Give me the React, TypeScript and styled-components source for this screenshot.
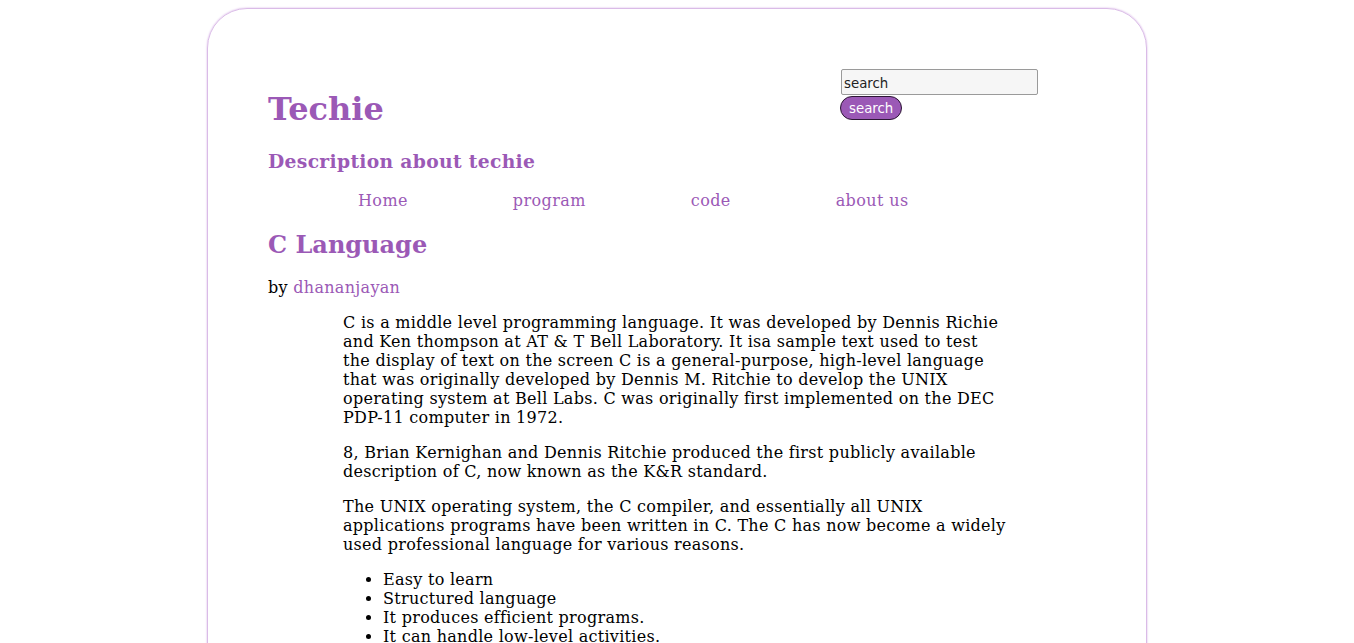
import React from "react";
import styled, { createGlobalStyle } from "styled-components";

const GlobalStyle = createGlobalStyle`
  html, body {
    margin: 0;
    padding: 0;
    background: #ffffff;
  }
  body {
    padding: 8px;
    font-family: "DejaVu Serif", serif;
    font-size: 16px;
    color: #000;
  }
`;

const purple = "#9b59b6";

const Wrapper = styled.div`
  width: 940px;
  box-sizing: border-box;
  margin: 0 auto;
  padding: 60px 60px 40px;
  border: 1px solid #dabbe7;
  box-shadow: 0 0 2px 0 #d2a9e3;
  border-radius: 40px;
  min-height: 900px;
`;

const Header = styled.header`
  display: flex;
  justify-content: space-between;
  align-items: flex-start;
`;

const Title = styled.h1`
  margin: 21.44px 0 0;
  font-family: "DejaVu Serif", serif;
  font-size: 32px;
  font-weight: bold;
  color: ${purple};
`;

const SearchForm = styled.form`
  width: 246px;
  display: flex;
  flex-direction: column;
  align-items: flex-start;
`;

const SearchInput = styled.input`
  width: 197px;
  height: 26px;
  box-sizing: border-box;
  margin: 0 0 0 1px;
  padding: 2px 2px 0;
  border: 1px solid #9a9a9a;
  border-radius: 2px;
  background: #f6f6f6;
  font-family: "DejaVu Sans", sans-serif;
  font-size: 13.33px;
  color: #222;
`;

const SearchButton = styled.button`
  margin: 1px 0 0;
  height: 24px;
  padding: 1px 8px 0;
  border: 1px solid #2b1733;
  border-radius: 12px;
  background: ${purple};
  color: #fff;
  font-family: "DejaVu Sans", sans-serif;
  font-size: 13.33px;
  line-height: 1;
`;

const Subtitle = styled.h3`
  margin: 21.44px 0 18.72px;
  font-family: "DejaVu Serif", serif;
  font-size: 18.72px;
  font-weight: bold;
  letter-spacing: 0.33px;
  color: ${purple};
`;

const Nav = styled.ul`
  list-style: none;
  display: flex;
  gap: 105px;
  margin: 16px 0;
  padding: 0 0 0 90px;
  letter-spacing: 0.4px;
`;

const NavItem = styled.li`
  display: block;
`;

const Link = styled.a`
  color: ${purple};
  text-decoration: none;
  font-size: 16px;
`;

const ArticleTitle = styled.h2`
  margin: 19.92px 0;
  font-family: "DejaVu Serif", serif;
  font-size: 24px;
  font-weight: bold;
  color: ${purple};
`;

const Byline = styled.p`
  margin: 16px 0;
  letter-spacing: 0.3px;
`;

const Body = styled.div`
  margin: 0 77px 0 75px;
  letter-spacing: 0.28px;
`;

const Para = styled.p`
  margin: 16px 0;
`;

const List = styled.ul`
  margin: 16px 0;
  padding-left: 40px;
  list-style: disc;
`;

const navItems = ["Home", "program", "code", "about us"];

const features = [
  "Easy to learn",
  "Structured language",
  "It produces efficient programs.",
  "It can handle low-level activities.",
  "It can be compiled on a variety of computer platforms.",
];

export default function App() {
  return (
    <>
      <GlobalStyle />
      <Wrapper>
        <Header>
          <Title>Techie</Title>
          <SearchForm onSubmit={(e) => e.preventDefault()}>
            <SearchInput type="text" defaultValue="search" />
            <SearchButton type="submit">search</SearchButton>
          </SearchForm>
        </Header>
        <Subtitle>Description about techie</Subtitle>
        <Nav>
          {navItems.map((n) => (
            <NavItem key={n}>
              <Link href="#">{n}</Link>
            </NavItem>
          ))}
        </Nav>
        <ArticleTitle>C Language</ArticleTitle>
        <Byline>
          by <Link href="#">dhananjayan</Link>
        </Byline>
        <Body>
          <Para>
            C is a middle level programming language. It was developed by Dennis Richie
            and Ken thompson at AT &amp; T Bell Laboratory. It isa sample text used to test
            the display of text on the screen C is a general-purpose, high-level language
            that was originally developed by Dennis M. Ritchie to develop the UNIX
            operating system at Bell Labs. C was originally first implemented on the DEC
            PDP-11 computer in 1972.
          </Para>
          <Para>
            8, Brian Kernighan and Dennis Ritchie produced the first publicly available
            description of C, now known as the K&amp;R standard.
          </Para>
          <Para>
            The UNIX operating system, the C compiler, and essentially all UNIX
            applications programs have been written in C. The C has now become a widely
            used professional language for various reasons.
          </Para>
          <List>
            {features.map((f) => (
              <li key={f}>{f}</li>
            ))}
          </List>
        </Body>
      </Wrapper>
    </>
  );
}
